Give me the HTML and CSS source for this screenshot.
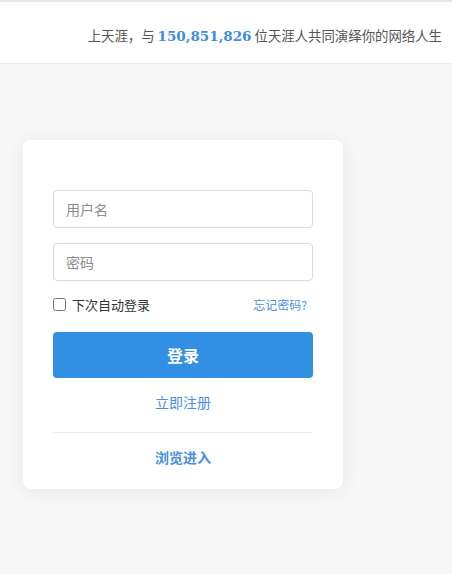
FILE: index.html
```html
<!DOCTYPE html>
<html lang="zh-CN">
<head>
<meta charset="utf-8">
<title>天涯社区 登录</title>
<link rel="stylesheet" href="styles.css">
</head>
<body>
<header class="topbar">
  <p class="slogan">上天涯，与 <span class="count">150,851,826</span> 位天涯人共同演绎你的网络人生</p>
</header>
<main class="main">
  <form class="card">
    <input class="field" type="text" placeholder="用户名">
    <input class="field" type="password" placeholder="密码">
    <div class="opts">
      <label class="remember"><input type="checkbox" class="chk"><span>下次自动登录</span></label>
      <a class="forgot" href="#">忘记密码?</a>
    </div>
    <button class="btn" type="button">登录</button>
    <a class="register" href="#">立即注册</a>
    <div class="divider"></div>
    <a class="browse" href="#">浏览进入</a>
  </form>
</main>
</body>
</html>
```
FILE: styles.css
```css
html, body {
  margin: 0;
  padding: 0;
}
body {
  background: #f7f7f7;
  font-family: "Noto Sans CJK SC", "Liberation Sans", sans-serif;
  color: #333;
  height: 574px;
  overflow: hidden;
}
.topbar {
  background: #fff;
  border-top: 2px solid #e6e6e6;
  border-bottom: 1px solid #ececec;
  height: 61px;
  display: flex;
  align-items: flex-end;
  justify-content: flex-end;
  padding-right: 10px;
}
.slogan {
  margin: 0 0 17px;
  font-size: 13.4px;
  line-height: 20px;
  color: #555;
  white-space: nowrap;
}
.count {
  font-family: "DejaVu Serif", "Liberation Serif", serif;
  font-weight: bold;
  font-size: 13.5px;
  color: #3a8ee6;
}
.main {
  padding: 76px 0 0 23px;
}
.card {
  width: 260px;
  background: #fff;
  border-radius: 8px;
  box-shadow: 0 2px 20px rgba(0, 0, 0, 0.07);
  padding: 50px 30px 22px;
  display: flex;
  flex-direction: column;
}
.field {
  box-sizing: border-box;
  width: 260px;
  height: 38px;
  border: 1px solid #dcdcdc;
  border-radius: 4px;
  padding: 0 12px;
  font-family: inherit;
  font-size: 14px;
  color: #333;
  outline: none;
  margin: 0 0 15px;
}
.field::placeholder {
  color: #8c8c8c;
}
.field + .field {
  margin-bottom: 0;
}
.opts {
  display: flex;
  justify-content: space-between;
  align-items: center;
  height: 20px;
  margin-top: 13px;
}
.remember {
  display: flex;
  align-items: center;
  font-size: 13px;
  color: #333;
}
.chk {
  width: 13px;
  height: 13px;
  margin: 0 6px 0 0;
}
.forgot {
  font-size: 12px;
  color: #4a8fe0;
  text-decoration: none;
  margin-right: 6px;
}
.btn {
  margin-top: 18px;
  height: 46px;
  border: none;
  border-radius: 4px;
  background: #3190e3;
  color: #fff;
  font-family: inherit;
  font-size: 16px;
  font-weight: bold;
  cursor: pointer;
}
.register {
  margin-top: 14px;
  text-align: center;
  font-size: 14px;
  line-height: 20px;
  color: #4a8fe0;
  text-decoration: none;
}
.divider {
  margin-top: 20px;
  height: 1px;
  background: #ececec;
}
.browse {
  margin-top: 14px;
  text-align: center;
  font-size: 14px;
  line-height: 20px;
  font-weight: bold;
  color: #4a8fe0;
  text-decoration: none;
}
```
